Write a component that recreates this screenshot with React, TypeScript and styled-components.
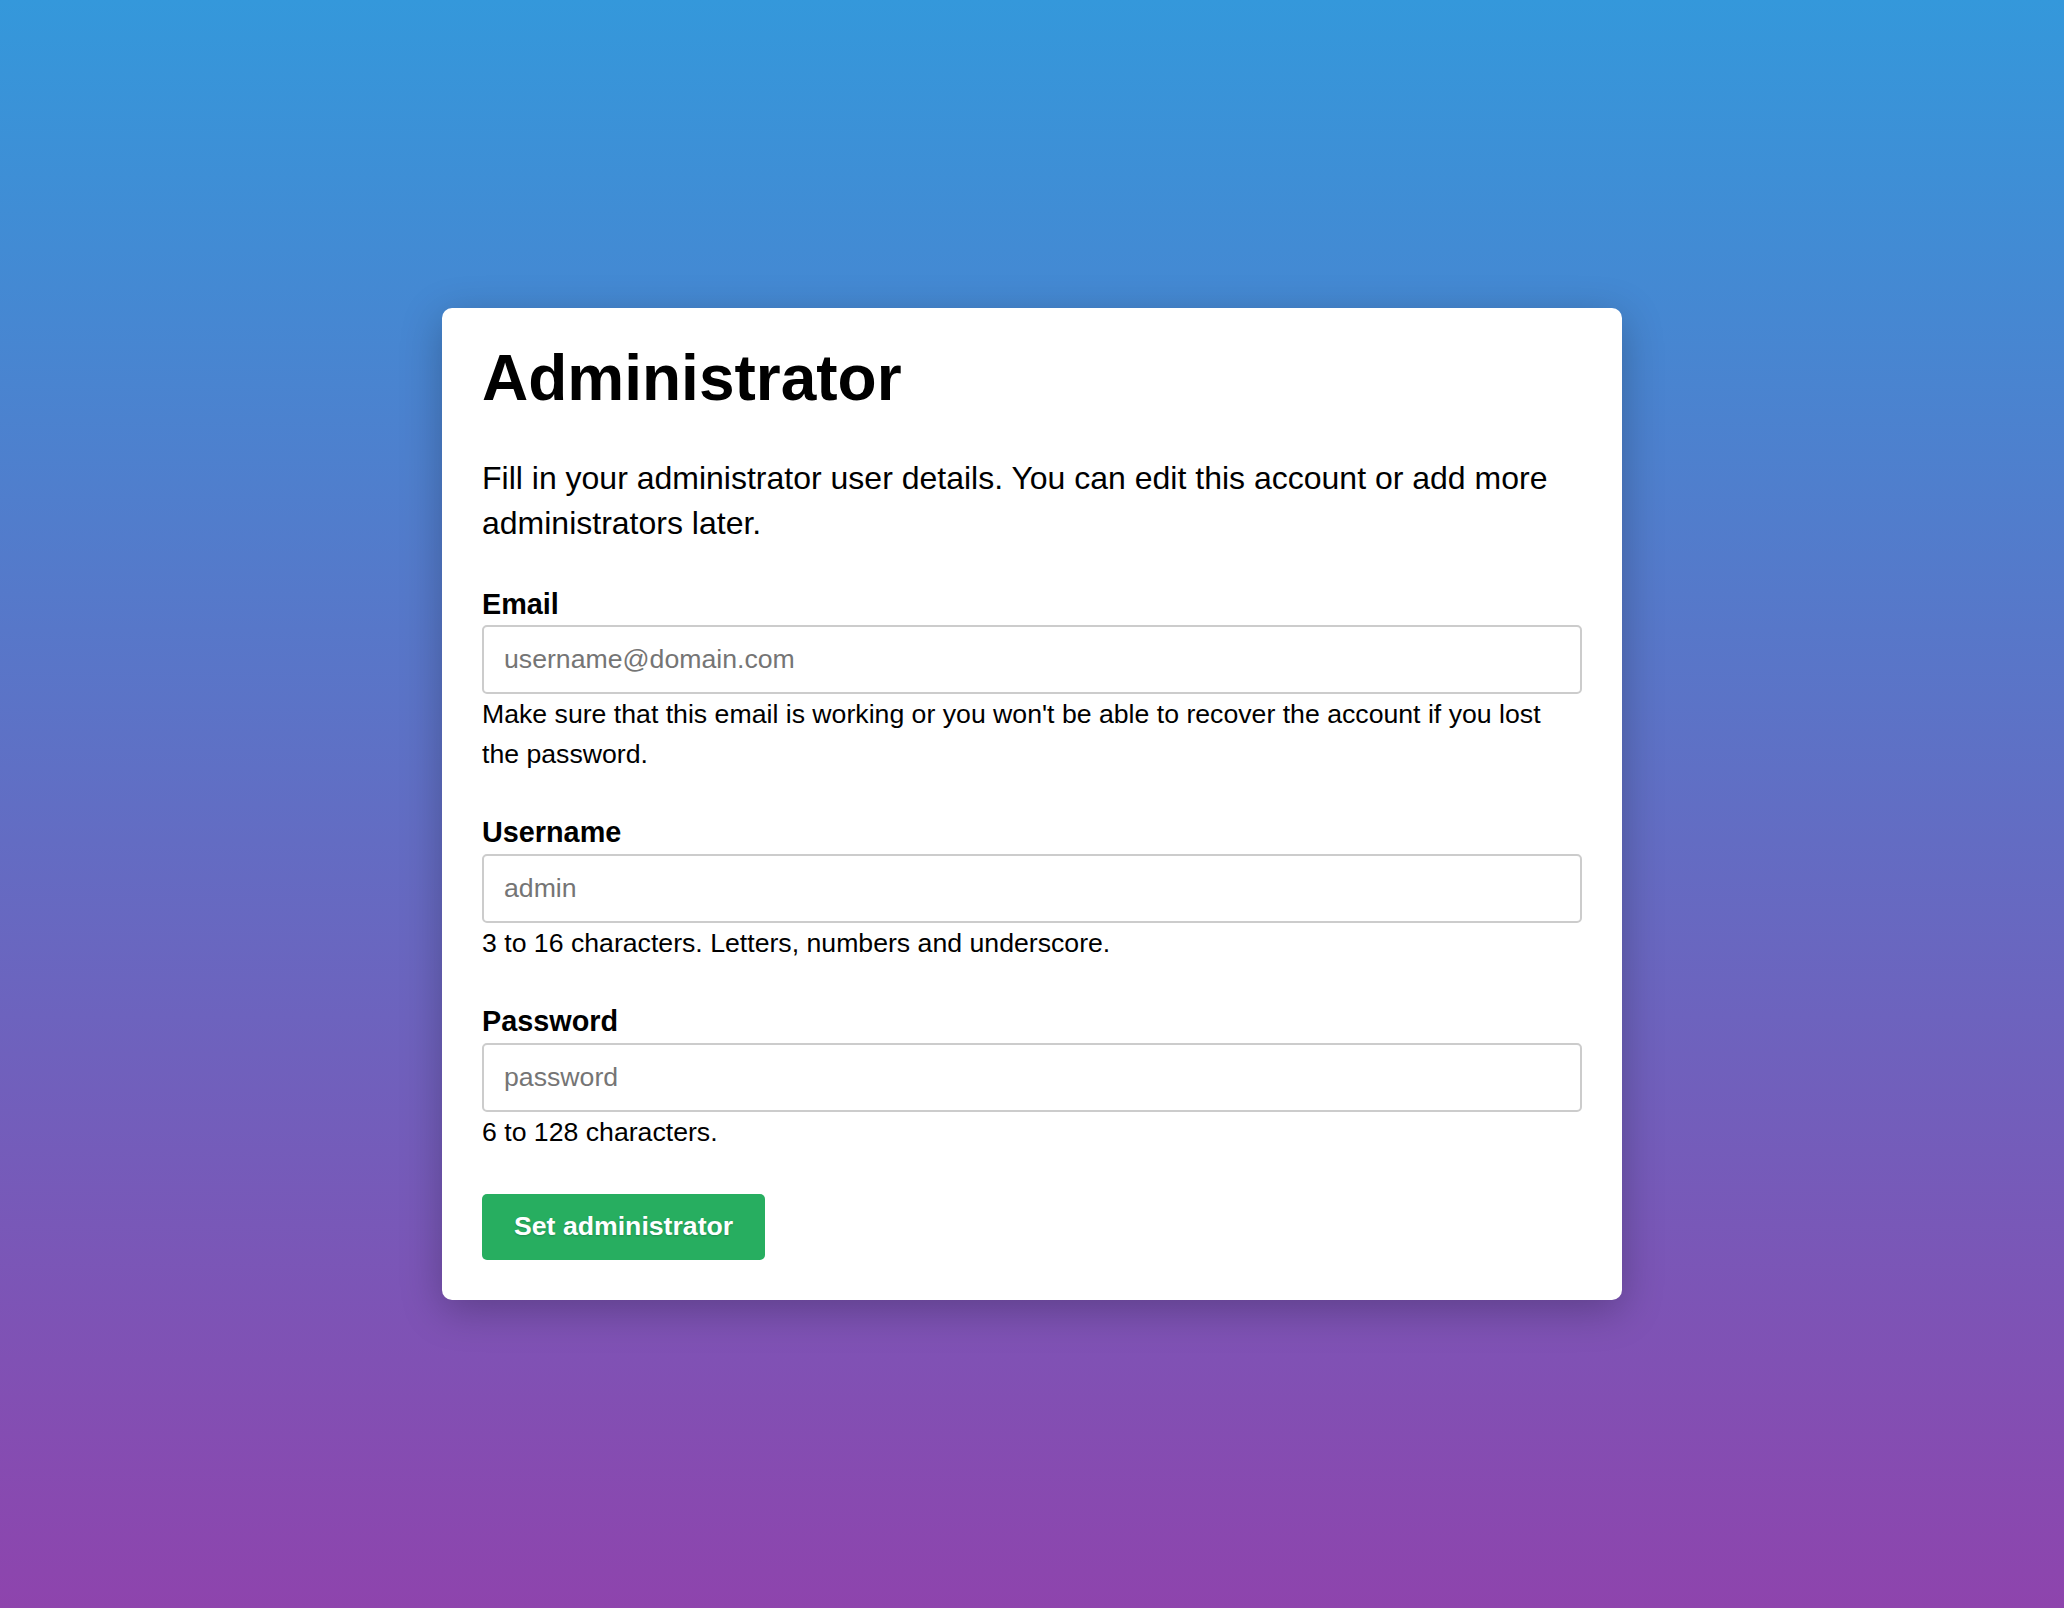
import { FC } from 'react'
import styled, { createGlobalStyle } from 'styled-components'

const GlobalStyle = createGlobalStyle`
  * {
    box-sizing: border-box;
  }
  html,
  body {
    margin: 0;
    padding: 0;
    height: 100%;
  }
  body {
    font-family: 'Liberation Sans', Arial, Helvetica, sans-serif;
    color: #000;
  }
  #root {
    height: 100%;
  }
`

const Page = styled.div`
  min-height: 100vh;
  display: flex;
  align-items: center;
  justify-content: center;
  background: linear-gradient(180deg, #3498db 0%, #8e44ad 100%);
`

const Card = styled.form`
  width: 1180px;
  background: #fff;
  border-radius: 10px;
  padding: 32px 40px 40px;
  box-shadow: 0 10px 40px rgba(0, 0, 0, 0.25);
  display: flex;
  flex-direction: column;
`

const Title = styled.h1`
  margin: 0;
  font-size: 64px;
  line-height: 76.8px;
  font-weight: 700;
`

const Intro = styled.p`
  margin: 39px 0 0;
  font-size: 32px;
  line-height: 44.8px;
`

const Field = styled.div`
  display: flex;
  flex-direction: column;
  margin-top: 41px;
`

const Label = styled.label`
  font-size: 28.8px;
  line-height: 34.8px;
  font-weight: 700;
  margin-bottom: 4px;
`

const Input = styled.input`
  height: 69px;
  width: 100%;
  border: 2px solid #cccccc;
  border-radius: 5px;
  padding: 0 20px;
  font-family: inherit;
  font-size: 26.67px;
  color: #000;
  outline: none;

  &::placeholder {
    color: #757575;
  }
`

const Hint = styled.div`
  font-size: 26.67px;
  line-height: 40px;
`

const Actions = styled.div`
  margin-top: 42px;
  display: flex;
`

const SubmitButton = styled.button`
  height: 66px;
  padding: 0 32px;
  border: none;
  border-radius: 5px;
  background: #27ae60;
  color: #fff;
  font-family: inherit;
  font-size: 26.67px;
  font-weight: 700;
  text-shadow: 0 1px 2px rgba(0, 0, 0, 0.2);
  cursor: pointer;
`

interface IFieldProps {
  id: string
  label: string
  type: string
  placeholder: string
  hint: string
}

const fields: IFieldProps[] = [
  {
    id: 'email',
    label: 'Email',
    type: 'email',
    placeholder: 'username@domain.com',
    hint: "Make sure that this email is working or you won't be able to recover the account if you lost the password.",
  },
  {
    id: 'username',
    label: 'Username',
    type: 'text',
    placeholder: 'admin',
    hint: '3 to 16 characters. Letters, numbers and underscore.',
  },
  {
    id: 'password',
    label: 'Password',
    type: 'password',
    placeholder: 'password',
    hint: '6 to 128 characters.',
  },
]

const FormField: FC<IFieldProps> = ({ id, label, type, placeholder, hint }) => (
  <Field>
    <Label htmlFor={id}>{label}</Label>
    <Input id={id} name={id} type={type} placeholder={placeholder} />
    <Hint>{hint}</Hint>
  </Field>
)

const App: FC = () => {
  return (
    <>
      <GlobalStyle />
      <Page>
        <Card onSubmit={(e) => e.preventDefault()}>
          <Title>Administrator</Title>
          <Intro>
            Fill in your administrator user details. You can edit this account
            or add more administrators later.
          </Intro>
          {fields.map((field) => (
            <FormField key={field.id} {...field} />
          ))}
          <Actions>
            <SubmitButton type="submit">Set administrator</SubmitButton>
          </Actions>
        </Card>
      </Page>
    </>
  )
}

export default App
